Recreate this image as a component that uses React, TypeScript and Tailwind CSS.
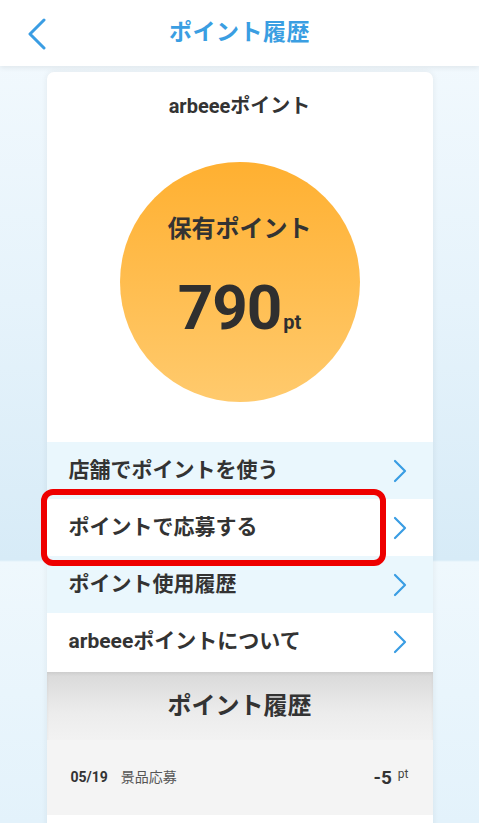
const menuItems = [
  { label: "店舗でポイントを使う", tinted: true },
  { label: "ポイントで応募する", tinted: false },
  { label: "ポイント使用履歴", tinted: true },
  { label: "arbeeeポイントについて", tinted: false },
];

function Chevron() {
  return (
    <svg width="14" height="24" viewBox="0 0 14 24" fill="none">
      <path d="M2 2 L12 12 L2 22" stroke="#3a9de3" strokeWidth="2.2" strokeLinecap="round" strokeLinejoin="round" />
    </svg>
  );
}

export default function App() {
  return (
    <div className="min-h-screen w-full overflow-hidden bg-[linear-gradient(to_bottom,#f4fafe_0px,#e6f3fb_300px,#d7ebf7_560px,#eff8fd_562px,#e3f2fb_823px)] font-['Roboto','Noto_Sans_CJK_JP',sans-serif] text-[#333]">
      {/* Header */}
      <header className="grid h-[66px] grid-cols-[1fr_auto_1fr] items-center bg-white shadow-[0_2px_5px_rgba(0,0,0,0.07)]">
        <div className="pl-[27px] pt-[1px]">
          <svg width="20" height="32" viewBox="0 0 20 32" fill="none">
            <path d="M17 2 L3 16 L17 30" stroke="#3a9de3" strokeWidth="3" strokeLinecap="round" strokeLinejoin="round" />
          </svg>
        </div>
        <h1 className="text-[23px] font-bold tracking-[0.5px] text-[#3a9ee2]">ポイント履歴</h1>
        <div />
      </header>

      <main className="flex justify-center pt-[6px]">
        <div className="w-[386px] rounded-t-[7px] bg-white shadow-[0_0_6px_rgba(0,0,0,0.07)]">
          <h2 className="pt-[20px] text-center text-[20px] font-bold leading-[28px]">arbeeeポイント</h2>

          {/* Points circle */}
          <div className="mt-[42px] flex justify-center">
            <div className="flex h-[240px] w-[240px] flex-col items-center rounded-full bg-[linear-gradient(to_bottom,#ffb031,#ffca6d)] pt-[51px]">
              <p className="text-[24px] font-bold leading-[32px] text-[#333]">保有ポイント</p>
              <p className="mt-[32px] flex items-baseline font-bold leading-none text-[#2f2f2f]">
                <span className="text-[62px] tracking-[-1px]">790</span>
                <span className="ml-[2px] text-[20px]">pt</span>
              </p>
            </div>
          </div>

          {/* Menu */}
          <ul className="relative mt-[40px]">
            {menuItems.map((item) => (
              <li
                key={item.label}
                className={`flex h-[57px] items-center justify-between pl-[22px] pr-[26px] ${item.tinted ? "bg-[#eaf7fd]" : "bg-white"}`}
              >
                <span className="text-[21px] font-bold">{item.label}</span>
                <Chevron />
              </li>
            ))}
            <div className="pointer-events-none absolute left-[-6px] top-[47px] h-[77px] w-[345px] rounded-[12px] border-[6px] border-[#ee0000]" />
          </ul>

          {/* History */}
          <section className="mt-[2px]">
            <div className="flex h-[68px] items-center justify-center bg-[linear-gradient(to_bottom,#d9d9d9,#ececec_60%,#f2f2f2)] shadow-[inset_0_2px_3px_rgba(0,0,0,0.06)]">
              <h3 className="text-[24px] font-bold">ポイント履歴</h3>
            </div>
            <div className="flex h-[75px] items-center justify-between bg-[#f4f4f4] pl-[24px] pr-[24px]">
              <div className="flex items-center gap-[13px]">
                <span className="text-[14px] font-bold">05/19</span>
                <span className="text-[14px] text-[#555]">景品応募</span>
              </div>
              <div className="flex items-start">
                <span className="text-[19px] font-bold leading-none">-5</span>
                <span className="ml-[6px] text-[12px] leading-none text-[#444]">pt</span>
              </div>
            </div>
            <div className="h-[40px] bg-white" />
          </section>
        </div>
      </main>
    </div>
  );
}
